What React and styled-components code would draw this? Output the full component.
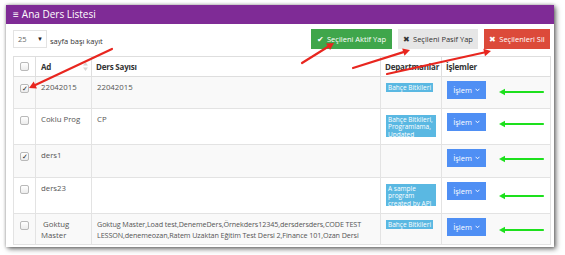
import React from "react";
import styled, { createGlobalStyle } from "styled-components";

const Global = createGlobalStyle`
  html, body { margin: 0; padding: 0; background: #fff; }
  body { font-family: "Open Sans", "Liberation Sans", sans-serif; width: 565px; height: 255px; overflow: hidden; position: relative; }
`;

const Panel = styled.div`
  margin: 5px 0 0 6px;
  width: 548px;
  background: #fff;
  box-shadow: 2px 2px 5px rgba(0,0,0,0.55), 0 0 3px rgba(0,0,0,0.3);
`;

const Header = styled.div`
  height: 19px;
  background: #7f2b96;
  color: #fff;
  font-size: 10px;
  line-height: 19px;
  padding-left: 7px;
  display: flex;
  align-items: center;
  gap: 3px;
`;

const Body = styled.div`
  padding: 5px 4px 2px 7px;
`;

const Controls = styled.div`
  display: flex;
  align-items: center;
  height: 20px;
  margin-bottom: 7px;
`;

const Select = styled.div`
  width: 34px;
  height: 18px;
  box-sizing: border-box;
  border: 1px solid #e3e3e3;
  display: flex;
  align-items: center;
  justify-content: space-between;
  padding: 0 3px 0 4px;
  font-size: 7.5px;
  color: #666;
`;

const Caret = styled.span`
  font-size: 6px;
  color: #222;
`;

const Label = styled.span`
  font-size: 7.5px;
  color: #333;
  margin-left: 3px;
  margin-top: 4px;
`;

const Spacer = styled.div`
  flex: 1;
`;

const ActionBtn = styled.div`
  height: 20px;
  width: ${p => p.w}px;
  margin-left: ${p => p.ml}px;
  background: ${p => p.bg};
  color: ${p => p.fg};
  font-size: 7.5px;
  display: flex;
  align-items: center;
  justify-content: center;
  gap: 3px;
  box-sizing: border-box;
`;

const Table = styled.table`
  border-collapse: collapse;
  width: 537px;
  table-layout: fixed;
  font-size: 7.8px;
  color: #555;
`;

const Th = styled.th`
  border: 1px solid #dedede;
  height: 19px;
  padding: 0 0 0 4px;
  text-align: left;
  font-weight: 700;
  font-size: 8px;
  letter-spacing: -0.2px;
  color: #333;
  white-space: nowrap;
  overflow: hidden;
`;

const SortTh = styled(Th)`
  position: relative;
  padding-left: 5px;
`;

const Tr = styled.tr`
  height: ${p => p.h}px;
  background: ${p => (p.odd ? "#f9f9f9" : "#fff")};
`;

const Td = styled.td`
  border: 1px solid #e3e3e3;
  vertical-align: top;
  padding: 5px 5px 0 5px;
  line-height: 11px;
`;

const BoxCell = styled(Td)`
  padding: 7px 0 0 6px;
`;

const HeadBoxCell = styled(Th)`
  padding: 0 0 0 6px;
`;

const Line = styled.span`
  display: block;
  white-space: nowrap;
  font-size: ${p => (p.small ? 7.2 : 7.8)}px;
  letter-spacing: ${p => (p.small ? -0.1 : 0)}px;
`;

const Check = styled.div`
  width: 9px;
  height: 9px;
  box-sizing: border-box;
  border: 1px solid #b9b9b9;
  border-radius: 2px;
  background: linear-gradient(#fff, #ececec);
  font-size: 7px;
  line-height: 8px;
  text-align: center;
  color: #222;
`;

const SortIcon = styled.svg`
  position: absolute;
  right: 3px;
  top: 5px;
`;

const Dept = styled.span`
  display: inline-block;
  max-width: 49px;
  max-height: ${p => (p.clip ? 21 : 100)}px;
  overflow: hidden;
  background: #5ab8e2;
  color: #fff;
  font-size: 6.5px;
  line-height: 7.5px;
  padding: 0.5px 2px;
  margin-top: 1px;
  vertical-align: top;
`;

const IslemBtn = styled.div`
  width: 39px;
  height: 18px;
  margin-top: -1px;
  background: #4f8ff4;
  color: #fff;
  font-size: 7.5px;
  display: flex;
  align-items: center;
  justify-content: center;
  gap: 3px;
`;

const Overlay = styled.svg`
  position: absolute;
  left: 0;
  top: 0;
  pointer-events: none;
`;

const rows = [
  { h: 32, checked: true, ad: "22042015", ders: ["22042015"], dept: "Bahçe Bitkileri" },
  { h: 36, checked: false, ad: "Coklu Prog", ders: ["CP"], dept: "Bahçe Bitkileri, Programlama, Updated", clip: true },
  { h: 33, checked: true, ad: "ders1", ders: [], dept: "" },
  { h: 36, checked: false, ad: "ders23", ders: [], dept: "A sample program created by API", clip: true },
  {
    h: 31,
    checked: false,
    ad: "\u00a0Goktug Master",
    small: true,
    ders: [
      "Goktug Master,Load test,DenemeDers,Örnekders12345,dersdersders,CODE TEST",
      "LESSON,denemeozan,Ratem Uzaktan Eğitim Test Dersi 2,Finance 101,Ozan Dersi",
    ],
    dept: "Bahçe Bitkileri",
  },
];

function Arrow({ x1, y1, x2, y2, color, head = 7, w = 2.2 }) {
  const ang = Math.atan2(y2 - y1, x2 - x1);
  const hw = head * 0.55;
  const bx = x2 - head * Math.cos(ang);
  const by = y2 - head * Math.sin(ang);
  const p1 = `${bx + hw * Math.sin(ang)},${by - hw * Math.cos(ang)}`;
  const p2 = `${bx - hw * Math.sin(ang)},${by + hw * Math.cos(ang)}`;
  return (
    <g>
      <line x1={x1} y1={y1} x2={bx} y2={by} stroke={color} strokeWidth={w} strokeLinecap="round" />
      <polygon points={`${x2},${y2} ${p1} ${p2}`} fill={color} />
    </g>
  );
}

function Chevron() {
  return (
    <svg width="5" height="4" viewBox="0 0 5 4">
      <path d="M0.6 0.8 L2.5 2.8 L4.4 0.8" fill="none" stroke="#fff" strokeWidth="0.9" />
    </svg>
  );
}

export default function App() {
  return (
    <>
      <Global />
      <Panel>
        <Header>
          <span>≡</span>
          <span>Ana Ders Listesi</span>
        </Header>
        <Body>
          <Controls>
            <Select>
              <span>25</span>
              <Caret>▼</Caret>
            </Select>
            <Label>sayfa başı kayıt</Label>
            <Spacer />
            <ActionBtn w={81} ml={0} bg="#3fa64b" fg="#fff">
              <span>✔</span>Seçileni Aktif Yap
            </ActionBtn>
            <ActionBtn w={80} ml={6} bg="#e6e6e6" fg="#333">
              <span>✖</span>Seçileni Pasif Yap
            </ActionBtn>
            <ActionBtn w={66} ml={6} bg="#dc4a3a" fg="#fff">
              <span>✖</span>Seçilenleri Sil
            </ActionBtn>
          </Controls>
          <Table>
            <colgroup>
              <col style={{ width: 22 }} />
              <col style={{ width: 56 }} />
              <col style={{ width: 289 }} />
              <col style={{ width: 61 }} />
              <col style={{ width: 109 }} />
            </colgroup>
            <thead>
              <tr>
                <HeadBoxCell>
                  <Check />
                </HeadBoxCell>
                <SortTh>
                  Ad
                  <SortIcon width="5" height="9" viewBox="0 0 5 9">
                    <path d="M2.5 0 L5 3.5 L0 3.5 Z" fill="#d6d6d6" />
                    <path d="M2.5 9 L5 5.5 L0 5.5 Z" fill="#d6d6d6" />
                  </SortIcon>
                </SortTh>
                <Th>Ders Sayısı</Th>
                <Th>Departmanlar</Th>
                <Th>İşlemler</Th>
              </tr>
            </thead>
            <tbody>
              {rows.map((r, i) => (
                <Tr key={i} h={r.h} odd={i % 2 === 0}>
                  <BoxCell>
                    <Check>{r.checked ? "✓" : ""}</Check>
                  </BoxCell>
                  <Td>{r.ad}</Td>
                  <Td>
                    {r.ders.map((l, j) => (
                      <Line key={j} small={r.small}>{l}</Line>
                    ))}
                  </Td>
                  <Td>{r.dept ? <Dept clip={r.clip}>{r.dept}</Dept> : null}</Td>
                  <Td>
                    <IslemBtn>
                      İşlem <Chevron />
                    </IslemBtn>
                  </Td>
                </Tr>
              ))}
            </tbody>
          </Table>
        </Body>
      </Panel>
      <Overlay width="565" height="255" viewBox="0 0 565 255">
        <Arrow x1={112} y1={49} x2={29} y2={88} color="#e8261f" />
        <Arrow x1={302} y1={63} x2={334} y2={43} color="#e8261f" />
        <Arrow x1={353} y1={68} x2={410} y2={50} color="#e8261f" />
        <Arrow x1={387} y1={74} x2={491} y2={51} color="#e8261f" />
        {[92, 124, 159, 196, 230].map(y => (
          <Arrow key={y} x1={543} y1={y} x2={499} y2={y} color="#1de01d" head={6} />
        ))}
      </Overlay>
    </>
  );
}
